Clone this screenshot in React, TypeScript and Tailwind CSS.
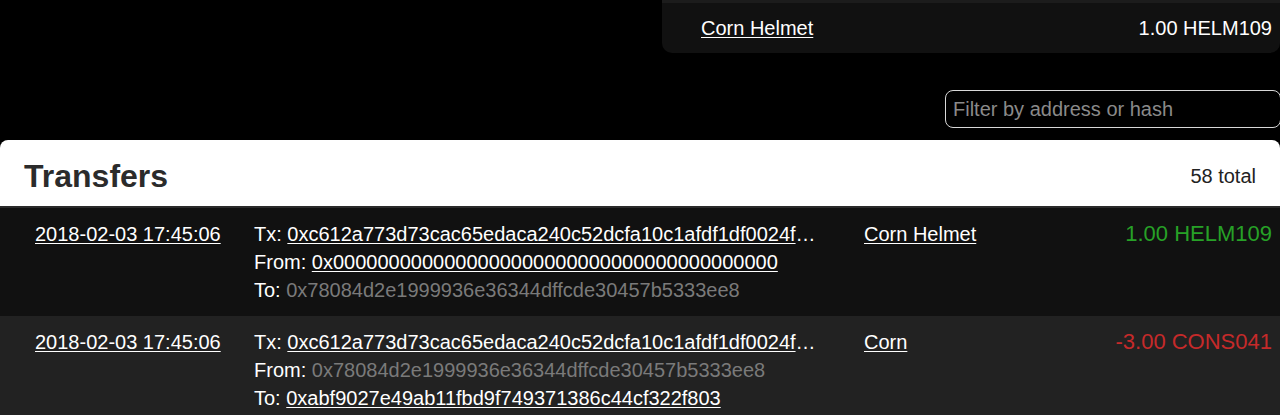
import React from "react";

const Link = ({ children }: { children: React.ReactNode }) => (
  <a href="#" className="text-white underline underline-offset-2 decoration-1">
    {children}
  </a>
);

type Row = {
  date: string;
  tx: string;
  from: string;
  fromLink: boolean;
  to: string;
  toLink: boolean;
  token: string;
  amount: string;
  positive: boolean;
  bg: string;
};

const rows: Row[] = [
  {
    date: "2018-02-03 17:45:06",
    tx: "0xc612a773d73cac65edaca240c52dcfa10c1afdf1df0024f",
    from: "0x0000000000000000000000000000000000000000",
    fromLink: true,
    to: "0x78084d2e1999936e36344dffcde30457b5333ee8",
    toLink: false,
    token: "Corn Helmet",
    amount: "1.00 HELM109",
    positive: true,
    bg: "bg-[#111111]",
  },
  {
    date: "2018-02-03 17:45:06",
    tx: "0xc612a773d73cac65edaca240c52dcfa10c1afdf1df0024f",
    from: "0x78084d2e1999936e36344dffcde30457b5333ee8",
    fromLink: false,
    to: "0xabf9027e49ab11fbd9f749371386c44cf322f803",
    toLink: true,
    token: "Corn",
    amount: "-3.00 CONS041",
    positive: false,
    bg: "bg-[#222222]",
  },
];

export default function App() {
  return (
    <div className="bg-black min-h-[415px] w-[1280px] overflow-hidden font-['Liberation_Sans',Arial,sans-serif] text-[20px] text-white">
      <div className="flex justify-end">
        <div className="w-[618px] bg-[#111111] rounded-b-[10px] overflow-hidden">
          <div className="h-[3px] bg-[#1c1c1c]" />
          <div className="h-[50px] flex items-center justify-between pl-[39px] pr-[8px] leading-[28px]">
            <Link>Corn Helmet</Link>
            <span>1.00 HELM109</span>
          </div>
        </div>
      </div>

      <div className="flex justify-end pt-[37px] pb-[12px]">
        <input
          className="w-[336px] -mr-[1px] h-[38px] rounded-[8px] border border-[#d8d8d8] bg-black pl-[7px] pr-[8px] text-[20px] text-white placeholder:text-[#8a8a8a] outline-none"
          placeholder="Filter by address or hash"
        />
      </div>

      <div className="rounded-t-[8px] overflow-hidden">
        <div className="bg-white h-[68px] pt-[6px] flex items-center justify-between pl-[24px] pr-[24px] border-b-2 border-[#2a2a2a]">
          <h2 className="text-[32px] font-bold text-[#2b2b2b] leading-none">Transfers</h2>
          <span className="text-[20px] text-[#222222]">58 total</span>
        </div>
        {rows.map((r, i) => (
          <div
            key={i}
            className={`${r.bg} grid grid-cols-[219px_610px_1fr_auto] pl-[35px] pr-[8px] py-[12px] leading-[28px]`}
          >
            <div>
              <Link>{r.date}</Link>
            </div>
            <div className="flex flex-col">
              <div className="whitespace-nowrap">
                Tx: <Link>{r.tx}</Link>…
              </div>
              <div className="whitespace-nowrap">
                From:{" "}
                {r.fromLink ? <Link>{r.from}</Link> : <span className="text-[#7a7a7a]">{r.from}</span>}
              </div>
              <div className="whitespace-nowrap">
                To:{" "}
                {r.toLink ? <Link>{r.to}</Link> : <span className="text-[#7a7a7a]">{r.to}</span>}
              </div>
            </div>
            <div>
              <Link>{r.token}</Link>
            </div>
            <div
              className={`text-[22px] text-right ${r.positive ? "text-[#27a127]" : "text-[#c62a2a]"}`}
            >
              {r.amount}
            </div>
          </div>
        ))}
      </div>
    </div>
  );
}
